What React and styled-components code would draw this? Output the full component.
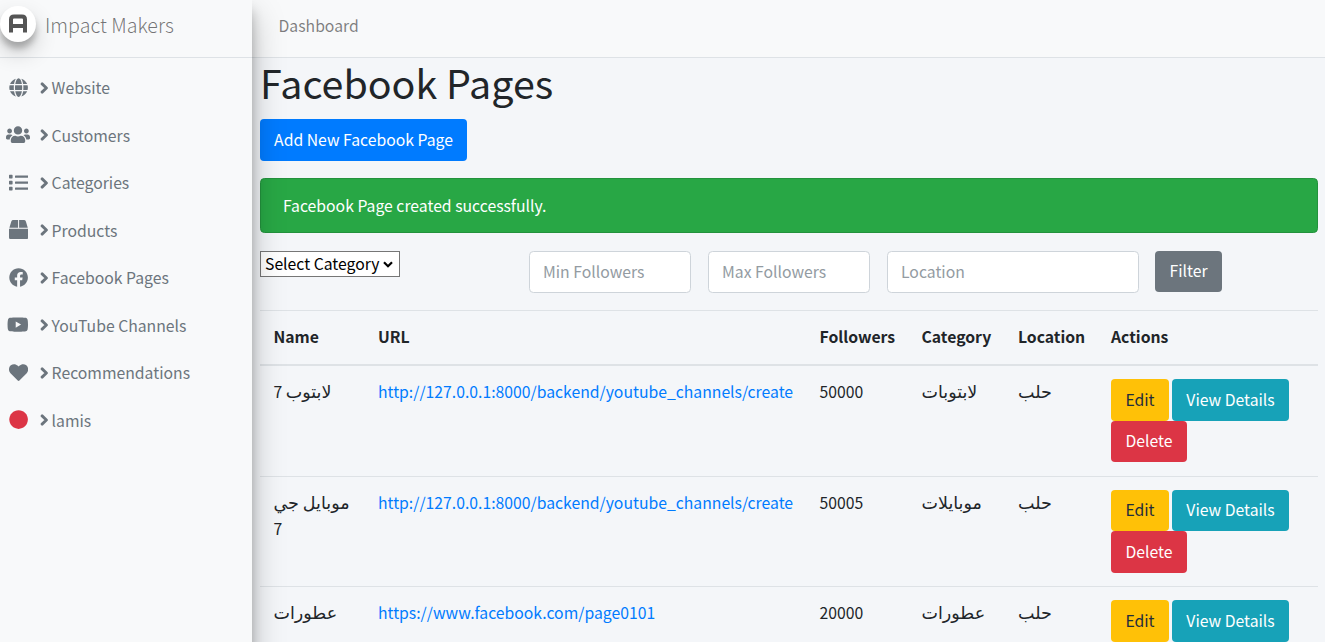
import React from "react";
import styled, { createGlobalStyle } from "styled-components";
import {
  FaGlobe,
  FaUsers,
  FaList,
  FaFacebook,
  FaYoutube,
  FaHeart,
  FaCircle,
} from "react-icons/fa";

const Global = createGlobalStyle`
  *, *::before, *::after { box-sizing: border-box; }
  body {
    margin: 0;
    background: #f4f6f9;
    color: #212529;
    font-family: "Noto Sans CJK JP", "Noto Sans", "DejaVu Sans", sans-serif;
    font-size: 15.75px;
    line-height: 26.4px;
  }
`;

const Page = styled.div`
  display: grid;
  grid-template-columns: 252px minmax(0, 1fr);
  height: 642px;
  overflow: hidden;
`;

const Sidebar = styled.aside`
  z-index: 1;
  background: #f8f9fa;
  box-shadow: 0 15.4px 30.8px rgba(0, 0, 0, 0.25), 0 11px 11px rgba(0, 0, 0, 0.22);
`;

const Brand = styled.a`
  display: flex;
  align-items: flex-start;
  gap: 9px;
  height: 58px;
  padding-top: 6px;
  border-bottom: 1px solid #dee2e6;
  color: rgba(0, 0, 0, 0.55);
  font-size: 19.65px;
  font-weight: 300;
  line-height: 38px;
  white-space: nowrap;
`;

const Logo = styled.svg`
  width: 36px;
  height: 36px;
  border-radius: 50%;
  background: #fff;
  box-shadow: 0 11px 22px rgba(0, 0, 0, 0.19), 0 6.6px 6.6px rgba(0, 0, 0, 0.23);
`;

const Menu = styled.nav`
  display: flex;
  flex-direction: column;
  padding-top: 6.5px;
`;

const MenuItem = styled.a`
  display: flex;
  align-items: center;
  height: 47.5px;
  color: #6c757d;
  white-space: nowrap;
`;

const MenuIcon = styled.span`
  display: flex;
  justify-content: center;
  width: 36.4px;
  margin-top: -2px;
  color: ${(p) => p.$color || "inherit"};

  svg { flex: none; width: ${(p) => p.$width}px; height: 19.2px; }
`;

const Angle = styled.svg`
  width: 9px;
  height: 12px;
  margin: -1px 3px 0 3.2px;
`;

const Main = styled.div`
  min-width: 0;
`;

const Topbar = styled.header`
  height: 58px;
  padding: 13px 26.5px;
  border-bottom: 1px solid #dee2e6;
  background: #f8f9fa;
  color: rgba(0, 0, 0, 0.5);
`;

const Content = styled.main`
  padding: 0 7px 0 8px;
`;

const Title = styled.h1`
  margin: 0 0 14px;
  font-size: 39.4px;
  font-weight: 400;
  line-height: 47px;
`;

const palette = {
  primary: ["#007bff", "#fff"],
  secondary: ["#6c757d", "#fff"],
  warning: ["#ffc107", "#1f2d3d"],
  info: ["#17a2b8", "#fff"],
  danger: ["#dc3545", "#fff"],
};

const Button = styled.button`
  display: block;
  flex: none;
  width: ${(p) => p.$width}px;
  height: ${(p) => p.$height || 41.5}px;
  padding: 0;
  border: 0;
  border-radius: 4px;
  background: ${(p) => palette[p.$kind][0]};
  color: ${(p) => palette[p.$kind][1]};
  font: inherit;
  white-space: nowrap;
`;

const Alert = styled.div`
  height: 55px;
  margin: 17.5px 0 18px;
  padding: 13.5px 22px;
  border: 1px solid #23923d;
  border-radius: 4.4px;
  background: #28a745;
  color: #fff;
`;

const Filters = styled.form`
  display: flex;
  align-items: flex-start;
  height: 59px;
`;

const SelectBox = styled.div`
  display: grid;
  grid-template-columns: 1fr 18px;
  align-items: center;
  width: 140px;
  height: 26px;
  margin-right: 129px;
  border: 1px solid #767676;
  background: #fff;
`;

const Select = styled.select`
  grid-area: 1 / 1 / 2 / 3;
  height: 24px;
  margin-top: -2px;
  padding: 0 0 0 4px;
  border: 0;
  appearance: none;
  background: transparent;
  color: #000;
  font: inherit;
  line-height: 23px;
`;

const SelectArrow = styled.svg`
  grid-area: 1 / 2;
  width: 10px;
  height: 7px;
  margin-left: 2px;
  pointer-events: none;
`;

const Input = styled.input`
  width: ${(p) => p.$width}px;
  height: 42px;
  margin-right: ${(p) => p.$gap}px;
  padding: 0 13px 2px;
  border: 1px solid #ced4da;
  border-radius: 4.4px;
  background: #fff;
  font: inherit;

  &::placeholder { color: #939ba2; opacity: 1; }
`;

const Table = styled.table`
  width: 1058px;
  table-layout: fixed;
  border-collapse: separate;
  border-spacing: 0;
`;

const HeadCell = styled.th`
  width: ${(p) => p.$width}px;
  height: 56px;
  padding: 0 13.5px;
  border-top: 1px solid #dee2e6;
  border-bottom: 2px solid #dee2e6;
  font-weight: 700;
  text-align: left;
  vertical-align: middle;
`;

const Cell = styled.td`
  height: 110.5px;
  padding: 13.4px 13.5px 12px;
  border-bottom: 1px solid #dee2e6;
  vertical-align: top;
`;

const Arabic = styled.span`
  font-size: 17.5px;
  line-height: 20px;
`;

const Link = styled.a`
  color: #007bff;
  white-space: nowrap;
`;

const Actions = styled.div`
  display: flex;
  flex-wrap: wrap;
  column-gap: 3px;
`;

const BoxIcon = () => (
  <svg viewBox="0 0 19.2 19.2" fill="currentColor">
    <path d="M9.1 0v7.7H.4L2.3 1.4Q2.8 0 4.2 0ZM10.1 0H15q1.4 0 1.9 1.4L18.8 7.7H10.1ZM0 8.7H19.2V17.4Q19.2 19.2 17.4 19.2H1.8Q0 19.2 0 17.4Z" />
  </svg>
);

const menu = [
  { label: "Website", icon: FaGlobe, width: 19.2 },
  { label: "Customers", icon: FaUsers, width: 24 },
  { label: "Categories", icon: FaList, width: 19.2 },
  { label: "Products", icon: BoxIcon, width: 19.2 },
  { label: "Facebook Pages", icon: FaFacebook, width: 19.2 },
  { label: "YouTube Channels", icon: FaYoutube, width: 21.6 },
  { label: "Recommendations", icon: FaHeart, width: 19.2 },
  { label: "lamis", icon: FaCircle, width: 19.2, color: "#dc3545" },
];

const columns = [
  ["Name", 104.5],
  ["URL", 441.5],
  ["Followers", 102],
  ["Category", 96.5],
  ["Location", 93],
  ["Actions", 220.5],
];

const channels = "http://127.0.0.1:8000/backend/youtube_channels/create";
const rows = [
  { name: "لابتوب", suffix: " 7", url: channels, followers: 50000, category: "لابتوبات", location: "حلب" },
  { name: "موبايل جي", suffix: " 7", url: channels, followers: 50005, category: "موبايلات", location: "حلب" },
  { name: "عطورات", suffix: "", url: "https://www.facebook.com/page0101", followers: 20000, category: "عطورات", location: "حلب" },
];

export default function App() {
  return (
    <>
      <Global />
      <Page>
        <Sidebar>
          <Brand>
            <Logo viewBox="0 0 36 36">
              <path
                d="M11 27V14q0-3 3-3h8q3 0 3 3v13M11 20.5h14"
                transform="translate(0 -0.5)"
                fill="none"
                stroke="#555"
                strokeWidth="4"
              />
            </Logo>
            <span>Impact Makers</span>
          </Brand>
          <Menu>
            {menu.map(({ label, icon: Icon, width, color }) => (
              <MenuItem key={label}>
                <MenuIcon $color={color} $width={width}>
                  <Icon />
                </MenuIcon>
                <Angle viewBox="0 0 9 12">
                  <path
                    d="M2.1 1.9l4.3 4.1L2.1 10.1"
                    fill="none"
                    stroke="currentColor"
                    strokeWidth="2.9"
                    strokeLinecap="round"
                    strokeLinejoin="round"
                  />
                </Angle>
                <span>{label}</span>
              </MenuItem>
            ))}
          </Menu>
        </Sidebar>
        <Main>
          <Topbar>Dashboard</Topbar>
          <Content>
            <Title>Facebook Pages</Title>
            <Button $kind="primary" $width={207}>Add New Facebook Page</Button>
            <Alert>Facebook Page created successfully.</Alert>
            <Filters>
              <SelectBox>
                <Select>
                  <option>Select Category</option>
                </Select>
                <SelectArrow viewBox="0 0 10 7">
                  <path d="M1 1.2l4 4 4-4" fill="none" stroke="#000" strokeWidth="2.2" />
                </SelectArrow>
              </SelectBox>
              <Input placeholder="Min Followers" $width={162} $gap={17} />
              <Input placeholder="Max Followers" $width={162} $gap={17} />
              <Input placeholder="Location" $width={252} $gap={16} />
              <Button type="button" $kind="secondary" $width={67} $height={41}>Filter</Button>
            </Filters>
            <Table>
              <thead>
                <tr>
                  {columns.map(([label, width]) => (
                    <HeadCell key={label} $width={width}>{label}</HeadCell>
                  ))}
                </tr>
              </thead>
              <tbody>
                {rows.map((row) => (
                  <tr key={row.name}>
                    <Cell><Arabic>{row.name}</Arabic>{row.suffix}</Cell>
                    <Cell><Link>{row.url}</Link></Cell>
                    <Cell>{row.followers}</Cell>
                    <Cell><Arabic>{row.category}</Arabic></Cell>
                    <Cell><Arabic>{row.location}</Arabic></Cell>
                    <Cell>
                      <Actions>
                        <Button $kind="warning" $width={58}>Edit</Button>
                        <Button $kind="info" $width={117}>View Details</Button>
                        <Button $kind="danger" $width={76}>Delete</Button>
                      </Actions>
                    </Cell>
                  </tr>
                ))}
              </tbody>
            </Table>
          </Content>
        </Main>
      </Page>
    </>
  );
}
